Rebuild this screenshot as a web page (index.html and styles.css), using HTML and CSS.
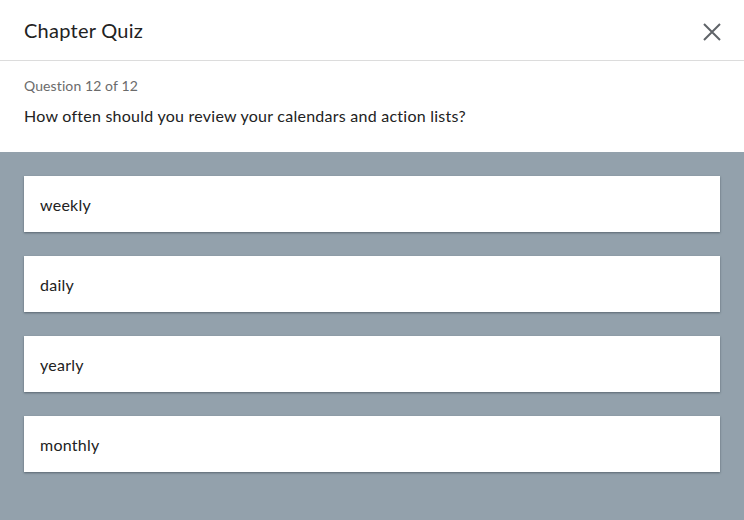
FILE: index.html
```html
<!DOCTYPE html>
<html lang="en">
<head>
<meta charset="utf-8">
<title>Chapter Quiz</title>
<link rel="stylesheet" href="styles.css">
</head>
<body>
<div class="dialog">
  <header class="header">
    <h1 class="title">Chapter Quiz</h1>
    <button class="close" aria-label="Close">
      <svg width="18" height="18" viewBox="0 0 18 18"><path d="M1 1L17 17M17 1L1 17" stroke="#5f6368" stroke-width="2" fill="none"/></svg>
    </button>
  </header>
  <section class="question">
    <div class="counter">Question 12 of 12</div>
    <div class="prompt">How often should you review your calendars and action lists?</div>
  </section>
  <section class="answers">
    <div class="answer">weekly</div>
    <div class="answer">daily</div>
    <div class="answer">yearly</div>
    <div class="answer">monthly</div>
  </section>
</div>
</body>
</html>
```
FILE: styles.css
```css
html, body {
  margin: 0;
  padding: 0;
  height: 100%;
}
body {
  font-family: Lato, "Liberation Sans", sans-serif;
  color: #212121;
  background: #93a1ac;
}
.dialog {
  display: flex;
  flex-direction: column;
  min-height: 100%;
}
.header {
  height: 61px;
  box-sizing: border-box;
  display: flex;
  align-items: center;
  justify-content: space-between;
  padding: 0 22px 0 24px;
  border-bottom: 1px solid #dcdcdc;
  background: #fff;
}
.title {
  margin: 0 0 1px;
  font-size: 20px;
  font-weight: 400;
  color: #222;
  letter-spacing: 0.25px;
}
.close {
  border: 0;
  background: none;
  padding: 0;
  width: 20px;
  height: 20px;
  display: flex;
  align-items: center;
  justify-content: center;
  cursor: pointer;
  margin-top: 4px;
}
.question {
  background: #fff;
  padding: 16px 24px 26px;
}
.counter {
  font-size: 14px;
  color: #6b6b6b;
  line-height: 18px;
  letter-spacing: 0.1px;
}
.prompt {
  margin-top: 11px;
  font-size: 16px;
  line-height: 20px;
  color: #222;
  letter-spacing: 0.25px;
}
.answers {
  flex: 1;
  background: #93a1ac;
  padding: 24px 24px 48px;
  display: flex;
  flex-direction: column;
  gap: 24px;
}
.answer {
  background: #fff;
  height: 56px;
  box-sizing: border-box;
  display: flex;
  align-items: center;
  padding: 0 16px;
  font-size: 16px;
  color: #222;
  letter-spacing: 0.25px;
  box-shadow: 0 1px 2px rgba(40, 52, 64, 0.55);
}
```
